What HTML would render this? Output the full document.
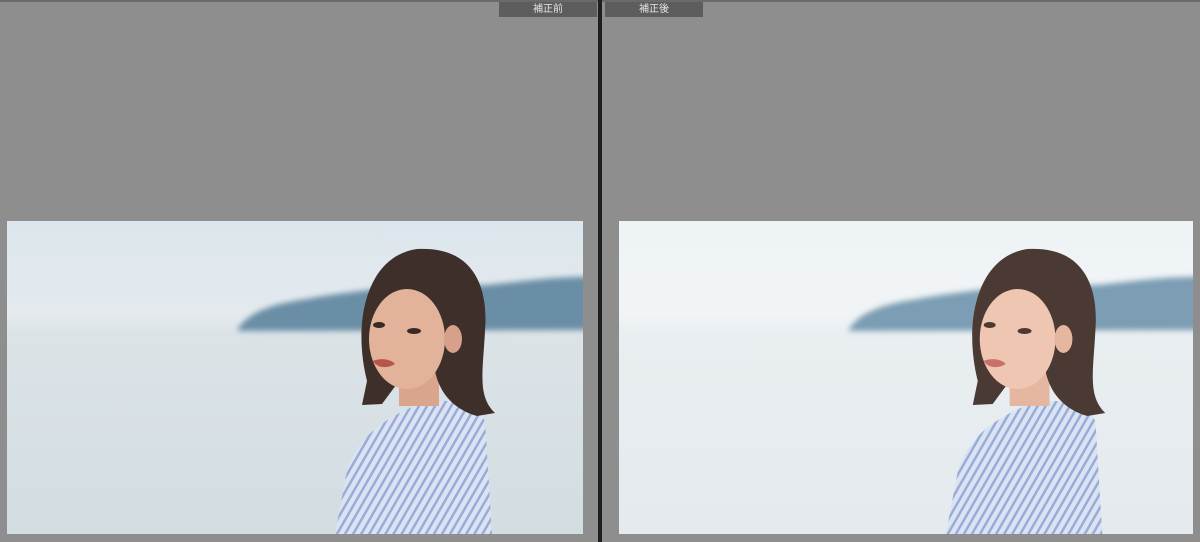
<!DOCTYPE html>
<html><head><meta charset="utf-8"><style>
html,body{margin:0;padding:0;width:1200px;height:542px;overflow:hidden;background:#8e8e8e;font-family:"Liberation Sans","Noto Sans CJK JP",sans-serif}
.top{position:absolute;left:0;top:0;width:1200px;height:2px;background:#6a6a6a}
.div{position:absolute;left:598px;top:0;width:4px;height:542px;background:#1e1e1e}
.lab{position:absolute;top:2px;height:15px;background:#5d5d5d;color:#e6e6e6;font-size:10px;line-height:15px;text-align:center}
svg.p{position:absolute;top:221px;height:313px}
</style></head><body>
<div class="top"></div>
<div class="div"></div>
<div class="lab" style="left:499px;width:98px">補正前</div>
<div class="lab" style="left:605px;width:64px;text-align:left;padding-left:34px">補正後</div>

<svg class="p" style="left:7px;width:576px" viewBox="0 0 576 313">
<defs>
<linearGradient id="sky" x1="0" y1="0" x2="0" y2="1"><stop offset="0" stop-color="#dce6ec"/><stop offset=".3" stop-color="#e4eaee"/><stop offset=".36" stop-color="#dbe3e7"/><stop offset="1" stop-color="#d3dde1"/></linearGradient>
<linearGradient id="sky2" x1="0" y1="0" x2="0" y2="1"><stop offset="0" stop-color="#eef3f6"/><stop offset=".3" stop-color="#f1f4f6"/><stop offset=".36" stop-color="#e9eef1"/><stop offset="1" stop-color="#e4eaed"/></linearGradient>
<pattern id="st" width="7" height="7" patternUnits="userSpaceOnUse" patternTransform="rotate(30)"><rect width="7" height="7" fill="#dbe3f3"/><rect width="2.5" height="7" fill="#98acd8"/></pattern>
<filter id="b" x="-20%" y="-50%" width="140%" height="200%"><feGaussianBlur stdDeviation="3"/></filter>
</defs>
<rect width="576" height="313" fill="url(#sky)"/>
<path d="M230 110 C240 90 270 82 300 78 C330 72 360 70 380 66 L480 64 C520 60 550 55 590 56 L590 109 Z" fill="#6a8ea6" filter="url(#b)"/>
<path d="M328 313 L340 250 C350 215 380 195 420 180 L465 180 L478 200 L485 313 Z" fill="url(#st)"/>
<rect x="392" y="140" width="40" height="45" fill="#d9a58c"/>
<path d="M360 160 C345 100 360 35 410 28 C462 25 482 60 478 110 C476 150 470 175 488 192 L470 195 C445 188 432 170 428 150 L392 160 L375 183 L355 184 Z" fill="#3e2f2a"/>
<ellipse cx="400" cy="118" rx="38" ry="50" fill="#e3b29b"/>
<path d="M358 100 C362 55 390 38 420 40 C440 45 452 60 454 90 L440 78 C430 62 410 58 395 62 C380 67 368 82 360 100 Z" fill="#3e2f2a"/>
<ellipse cx="446" cy="118" rx="9" ry="14" fill="#d6a08a"/>
<ellipse cx="372" cy="104" rx="6" ry="3" fill="#3a2a26"/>
<ellipse cx="407" cy="110" rx="7" ry="3" fill="#3a2a26"/>
<path d="M366 140 C375 136 385 139 388 143 C380 148 370 147 366 140 Z" fill="#b9544b"/>
</svg>

<svg class="p" style="left:619px;width:574px" viewBox="0 0 576 313" preserveAspectRatio="none">
<rect width="576" height="313" fill="url(#sky2)"/>
<path d="M230 110 C240 90 270 82 300 78 C330 72 360 70 380 66 L480 64 C520 60 550 55 590 56 L590 109 Z" fill="#7c9db3" filter="url(#b)"/>
<path d="M328 313 L340 250 C350 215 380 195 420 180 L465 180 L478 200 L485 313 Z" fill="url(#st)"/>
<rect x="392" y="140" width="40" height="45" fill="#e6b7a0"/>
<path d="M360 160 C345 100 360 35 410 28 C462 25 482 60 478 110 C476 150 470 175 488 192 L470 195 C445 188 432 170 428 150 L392 160 L375 183 L355 184 Z" fill="#4a3a33"/>
<ellipse cx="400" cy="118" rx="38" ry="50" fill="#efc6b1"/>
<path d="M358 100 C362 55 390 38 420 40 C440 45 452 60 454 90 L440 78 C430 62 410 58 395 62 C380 67 368 82 360 100 Z" fill="#4a3a33"/>
<ellipse cx="446" cy="118" rx="9" ry="14" fill="#e6b7a0"/>
<ellipse cx="372" cy="104" rx="6" ry="3" fill="#4a3a33"/>
<ellipse cx="407" cy="110" rx="7" ry="3" fill="#4a3a33"/>
<path d="M366 140 C375 136 385 139 388 143 C380 148 370 147 366 140 Z" fill="#c8706a"/>
</svg>
</body></html>
